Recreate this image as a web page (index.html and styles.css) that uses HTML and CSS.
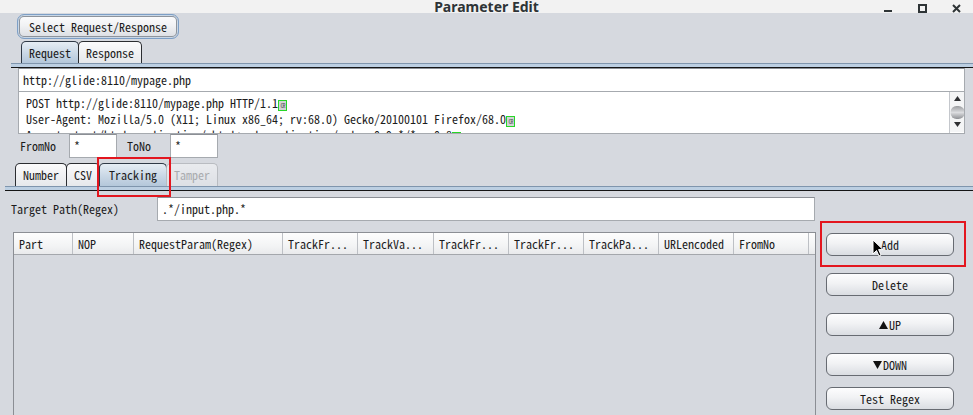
FILE: index.html
```html
<!DOCTYPE html>
<html lang="en">
<head>
<meta charset="utf-8">
<title>Parameter Edit</title>
<link rel="stylesheet" href="styles.css">
</head>
<body>
<header class="titlebar">
  <span class="title">Parameter Edit</span>
  <svg class="wctl" width="90" height="13" viewBox="0 0 90 13">
    <rect x="1" y="10" width="8" height="2" fill="#2e3436"/>
    <rect x="36" y="5" width="7" height="7" fill="none" stroke="#2e3436" stroke-width="2"/>
    <path d="M70 5 L77 12 M77 5 L70 12" stroke="#2e3436" stroke-width="2" fill="none"/>
  </svg>
</header>

<main class="content">
  <button class="btn select-btn">Select Request/Response</button>

  <div class="tabs tabs-top">
    <div class="tab selected">Request</div>
    <div class="tab">Response</div>
  </div>
  <div class="strip strip-top"></div>

  <section class="req-panel">
    <div class="field url">http://glide:8110/mypage.php</div>
    <div class="textarea">
      <div class="lines">
        <div class="line">POST http://glide:8110/mypage.php HTTP/1.1<span class="cr">CR</span></div>
        <div class="line">User-Agent: Mozilla/5.0 (X11; Linux x86_64; rv:68.0) Gecko/20100101 Firefox/68.0<span class="cr">CR</span></div>
        <div class="line">Accept: text/html,application/xhtml+xml,application/xml;q=0.9,*/*;q=0.8<span class="cr">CR</span></div>
      </div>
      <div class="vscroll">
        <svg width="15" height="40" viewBox="0 0 15 40">
          <defs>
            <linearGradient id="thumb" x1="0" y1="0" x2="0" y2="1">
              <stop offset="0" stop-color="#9a9c9f"/>
              <stop offset="0.5" stop-color="#dcdde0"/>
              <stop offset="1" stop-color="#8e9094"/>
            </linearGradient>
          </defs>
          <rect x="0" y="0" width="15" height="40" fill="#f4f5f6"/>
          <path d="M7.5 4 L11 9 L4 9 Z" fill="#2f3033"/>
          <rect x="0.5" y="14" width="14" height="13" rx="6" fill="url(#thumb)"/>
          <path d="M4 30 L11 30 L7.5 35 Z" fill="#2f3033"/>
        </svg>
      </div>
    </div>
  </section>

  <div class="range-row">
    <span class="lbl lbl-from">FromNo</span>
    <div class="field small">*</div>
    <span class="lbl lbl-to">ToNo</span>
    <div class="field small">*</div>
  </div>

  <div class="tabs tabs-bottom">
    <div class="tab">Number</div>
    <div class="tab">CSV</div>
    <div class="tab selected wide">Tracking</div>
    <div class="tab disabled">Tamper</div>
  </div>
  <div class="strip strip-bottom"></div>

  <div class="target-row">
    <span class="lbl lbl-target">Target Path(Regex)</span>
    <div class="field target">.*/input.php.*</div>
  </div>

  <div class="table-area">
    <div class="table">
      <div class="thead">
        <div class="th">Part</div>
        <div class="th">NOP</div>
        <div class="th">RequestParam(Regex)</div>
        <div class="th">TrackFr...</div>
        <div class="th">TrackVa...</div>
        <div class="th">TrackFr...</div>
        <div class="th">TrackFr...</div>
        <div class="th">TrackPa...</div>
        <div class="th">URLencoded</div>
        <div class="th">FromNo</div>
        <div class="th last"></div>
      </div>
      <div class="tbody"></div>
    </div>
    <div class="side-buttons">
      <button class="btn side">Add</button>
      <button class="btn side">Delete</button>
      <button class="btn side"><svg class="tri" width="9" height="8" viewBox="0 0 9 8"><path d="M4.5 0 L9 8 L0 8 Z" fill="#111"/></svg>UP</button>
      <button class="btn side"><svg class="tri" width="9" height="8" viewBox="0 0 9 8"><path d="M0 0 L9 0 L4.5 8 Z" fill="#111"/></svg>DOWN</button>
      <button class="btn side test">Test Regex</button>
    </div>
  </div>
</main>

<div class="mark mark-tracking"></div>
<div class="mark mark-add"></div>
<svg class="cursor" width="12" height="19" viewBox="0 0 12 19">
  <path d="M1 1 L1 15 L4.5 11.5 L7 17 L9 16 L6.6 10.6 L11 10.6 Z" fill="#000" stroke="#fff" stroke-width="1" stroke-linejoin="round"/>
</svg>
</body>
</html>
```

FILE: styles.css
```css
* { box-sizing: border-box; }
html, body { margin: 0; padding: 0; }
body {
  width: 973px;
  height: 415px;
  overflow: hidden;
  position: relative;
  background: #d6d9df;
  font-family: "Noto Sans Mono CJK JP", "Noto Sans Mono CJK SC", "Liberation Mono", monospace;
  font-size: 12px;
  color: #1c1c1c;
}

/* title bar */
.titlebar {
  height: 13px;
  background: #f2f2f2;
  display: grid;
  grid-template-columns: 1fr auto 1fr;
  overflow: hidden;
}
.title {
  grid-column: 2;
  font-family: "Noto Sans", "Open Sans", sans-serif;
  font-weight: 700;
  font-size: 14px;
  line-height: 13px;
  color: #2e3436;
  white-space: nowrap;
}
.wctl { grid-column: 3; justify-self: end; display: block; }

.content { padding-top: 1px; }

/* buttons */
.btn {
  font: inherit;
  color: #1b1b1b;
  display: flex;
  align-items: center;
  justify-content: center;
  height: 23px;
  padding: 0;
  border: 1px solid #676b72;
  border-radius: 6px;
  background: linear-gradient(#fdfdfe, #f1f2f4 45%, #dadde2);
  line-height: 16px;
}
.select-btn {
  margin-left: 17px;
  width: 162px;
  height: 25px;
  border-color: #7d9fc6;
  box-shadow: inset 0 0 0 1px #c9d7e6, inset 0 0 0 2px #8e949c;
  border-radius: 7px;
}

/* tabs */
.tabs { display: flex; }
.tabs-top { margin: 2px 0 0 21px; height: 22px; }
.tabs-bottom { margin: 5px 0 0 15px; height: 23px; }
.tab {
  height: 100%;
  padding: 0 7px;
  margin-right: -1px;
  border: 1px solid #2b2d31;
  border-bottom: none;
  border-radius: 5px 5px 0 0;
  background: linear-gradient(#fbfbfc, #e6e8eb);
  display: flex;
  align-items: center;
  line-height: 16px;
}
.tab.selected {
  background: linear-gradient(#e6edf4, #c9d7e5 55%, #b4c7da);
  border-color: #2f3946;
}
.tab.wide { padding: 0 9px; }
.tab.disabled {
  color: #a9abaf;
  border-color: #b9bcc1;
  background: linear-gradient(#e9ebee, #dde0e5);
}

.strip {
  height: 5px;
  border-top: 1px solid #7f95ad;
  border-bottom: 1px solid #151515;
  background: #bccfe2;
}
.strip-top { margin-left: 11px; }
.strip-bottom { margin-left: 5px; }

/* fields */
.field {
  background: #fff;
  border: 1px solid #a6aaaf;
  border-top-color: #8b8f95;
  height: 24px;
  padding-left: 4px;
  display: flex;
  align-items: center;
  line-height: 16px;
  white-space: nowrap;
}
.req-panel { margin: 0 8px 0 18px; }
.url { padding-left: 4px; }

.textarea {
  height: 42px;
  background: #fff;
  border: 1px solid #a6aaaf;
  border-top: none;
  display: flex;
  overflow: hidden;
}
.lines {
  flex: 1;
  padding: 3px 0 0 7px;
  overflow: hidden;
  white-space: nowrap;
}
.line { height: 16px; line-height: 16px; }
.cr {
  display: inline-block;
  width: 9px;
  height: 11px;
  overflow: hidden;
  vertical-align: -3px;
  border: 1px solid #27d627;
  background: #d2d3d5;
  color: #555;
  font-size: 6px;
  line-height: 9px;
  text-align: center;
  letter-spacing: -1px;
}
.vscroll { width: 15px; border-left: 1px solid #c4c7cc; }
.vscroll svg { display: block; }

/* range row */
.range-row {
  display: flex;
  align-items: center;
  height: 24px;
  padding-left: 20px;
}
.lbl { line-height: 16px; white-space: nowrap; }
.lbl-from { width: 49px; }
.lbl-to { width: 43px; margin-left: 10px; }
.small { width: 48px; align-items: flex-start; padding-top: 3px; }

/* target */
.target-row {
  display: flex;
  align-items: center;
  margin-top: 6px;
  padding-left: 11px;
}
.lbl-target { width: 146px; }
.target { width: 658px; }

/* table */
.table-area {
  display: flex;
  margin-top: 11px;
  padding-left: 13px;
  height: 183px;
}
.table {
  width: 803px;
  border-left: 1px solid #8b8e94;
  border-right: 1px solid #8b8e94;
  display: flex;
  flex-direction: column;
}
.thead {
  display: grid;
  grid-template-columns: 59px 61px 149px 75px 76px 75px 75px 75px 75px 75px 6px;
  height: 23px;
  border-top: 1px solid #8b8e94;
  border-bottom: 1px solid #a4a7ac;
  background: linear-gradient(#fdfdfd, #f3f4f5 60%, #e9eaec);
}
.th {
  border-right: 1px solid #bdc0c5;
  padding-left: 5px;
  line-height: 21px;
  white-space: nowrap;
  overflow: hidden;
}
.th.last { border-right: none; }
.tbody { flex: 1; }

.side-buttons {
  margin-left: 10px;
  padding-top: 1px;
  display: flex;
  flex-direction: column;
  gap: 17px;
}
.side { width: 128px; }
.side.test { margin-top: -6px; }
.tri { margin-right: 1px; }

/* annotation overlays */
.mark {
  position: absolute;
  border: 2px solid #e3161f;
}
.mark-tracking { left: 97px; top: 157px; width: 74px; height: 40px; }
.mark-add { left: 820px; top: 221px; width: 146px; height: 46px; }
.cursor { position: absolute; left: 872px; top: 239px; }
```
